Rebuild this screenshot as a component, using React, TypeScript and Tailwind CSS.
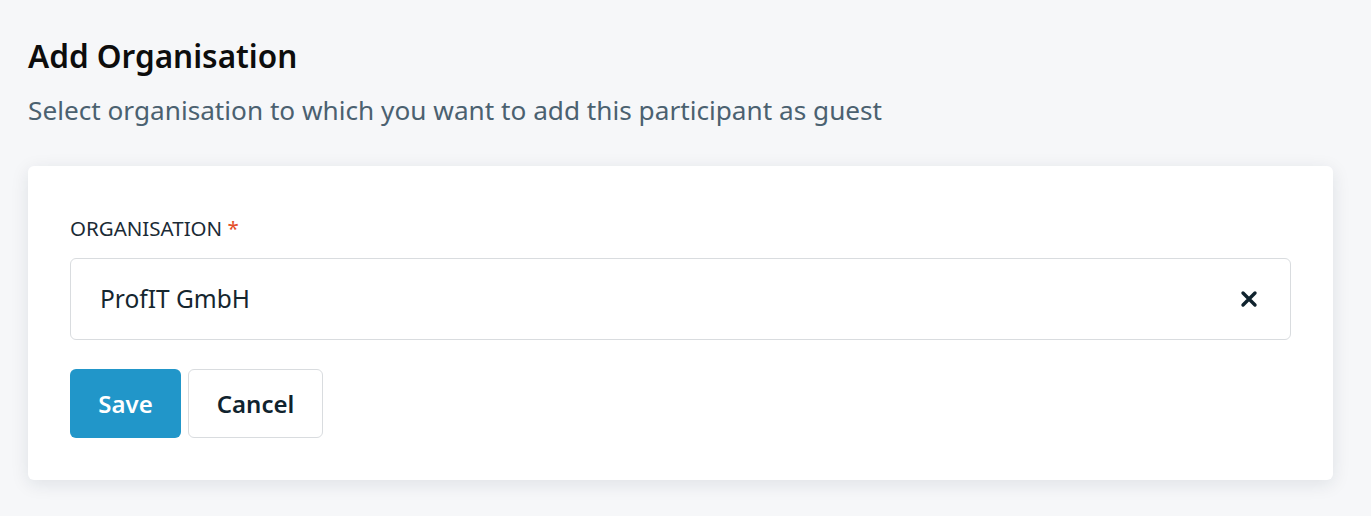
export default function App() {
  return (
    <div className="min-h-screen bg-[#f6f7f9] px-[28px] pt-[36px] pb-8" style={{ fontFamily: '"Noto Sans", "Open Sans", sans-serif' }}>
      <h1 className="text-[31.5px] leading-[40px] font-semibold text-[#0d0d0d]">Add Organisation</h1>
      <p className="mt-[17px] text-[26.2px] leading-[34px] text-[#4b6170]">
        Select organisation to which you want to add this participant as guest
      </p>

      <div className="mt-[39px] w-[1305px] rounded-[6px] bg-white px-[42px] pt-[48px] pb-[42px] shadow-[0_4px_18px_rgba(20,40,60,0.10)]">
        <label className="block text-[20.5px] leading-[28px] text-[#1b2b36]">
          ORGANISATION <span className="text-[#e4502a]">*</span>
        </label>

        <div className="mt-[16px] flex h-[82px] items-center justify-between rounded-[6px] border border-[#d9dcdf] bg-white pl-[29px] pr-[32px]">
          <span className="text-[24.5px] text-[#15262f]">ProfIT GmbH</span>
          <svg width="18" height="18" viewBox="0 0 18 18" className="text-[#10232e]">
            <path d="M3 3L15 15M15 3L3 15" stroke="currentColor" strokeWidth="3.4" strokeLinecap="round" />
          </svg>
        </div>

        <div className="mt-[29px] flex gap-[7px]">
          <button className="h-[69px] w-[111px] rounded-[6px] bg-[#2196c9] text-[24px] font-semibold text-white">
            Save
          </button>
          <button className="h-[69px] w-[135px] rounded-[6px] border border-[#d9dcdf] bg-white text-[24px] font-semibold text-[#10232e]">
            Cancel
          </button>
        </div>
      </div>
    </div>
  )
}
